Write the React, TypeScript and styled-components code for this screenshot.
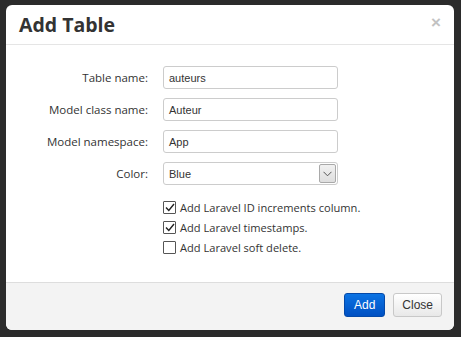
import React from "react";
import styled, { createGlobalStyle } from "styled-components";

//~~~~~~~~~~~~~~~~~~~Global
const GlobalStyle = createGlobalStyle`
  html, body {
    margin: 0;
    padding: 0;
    background: #2b2b2b;
  }
  * {
    box-sizing: border-box;
  }
`;

//~~~~~~~~~~~~~~~~~~~Styled Components
const Backdrop = styled.div`
  width: 461px;
  height: 337px;
  padding: 5px 7px 7px 6px;
  background: #2b2b2b;
`;

const Modal = styled.div`
  width: 448px;
  height: 325px;
  background: #fff;
  border-radius: 6px;
  display: flex;
  flex-direction: column;
  overflow: hidden;
  font-family: "Open Sans", "Noto Sans", sans-serif;
  color: #333;
`;

const Header = styled.header`
  height: 40px;
  flex: none;
  display: flex;
  align-items: center;
  justify-content: space-between;
  padding: 0 13px 1px 13px;
  border-bottom: 1px solid #e5e5e5;

  & > h2 {
    margin: 0;
    font-size: 19.5px;
    font-weight: 700;
    color: #333;
  }
`;

const CloseX = styled.button`
  border: 0;
  background: none;
  padding: 0;
  margin-top: -4px;
  font-family: "Liberation Sans", Arial, sans-serif;
  font-size: 17px;
  font-weight: 700;
  line-height: 1;
  color: #c2c2c2;
  cursor: pointer;
`;

const Body = styled.main`
  flex: 1;
  padding-top: 21px;
`;

const Form = styled.div`
  display: grid;
  grid-template-columns: 142px 175px;
  column-gap: 15px;
  row-gap: 9px;
  align-items: center;
`;

const Label = styled.label`
  text-align: right;
  font-size: 11.5px;
  color: #333;
`;

const TextInput = styled.div`
  height: 23px;
  border: 1px solid #ccc;
  border-radius: 3px;
  padding: 0 5px;
  display: flex;
  align-items: center;
  font-family: "Liberation Sans", Arial, sans-serif;
  font-size: 11px;
  color: #333;
`;

const Select = styled(TextInput)`
  padding-right: 1px;
  justify-content: space-between;
`;

const Arrow = styled.span`
  width: 17px;
  height: 19px;
  border: 1px solid #a9a9a9;
  border-radius: 2px;
  background: linear-gradient(#f1f1f1, #dedede);
  display: flex;
  align-items: center;
  justify-content: center;

  & > svg {
    width: 9px;
    height: 6px;
  }
`;

const Checks = styled.div`
  grid-column: 2;
  margin-top: 6px;
  display: flex;
  flex-direction: column;
  gap: 5px;
  width: 220px;
`;

const CheckRow = styled.div`
  display: flex;
  align-items: center;
  gap: 4px;
  font-size: 11.1px;
  white-space: nowrap;
  color: #333;
`;

const Box = styled.span`
  width: 13px;
  height: 13px;
  flex: none;
  border: 1px solid #555;
  border-radius: 1px;
  background: #fff;
  display: flex;
  align-items: center;
  justify-content: center;

  & > svg {
    width: 10px;
    height: 9px;
  }
`;

const Footer = styled.footer`
  height: 48px;
  flex: none;
  background: #f3f3f3;
  border-top: 1px solid #ddd;
  display: flex;
  align-items: center;
  justify-content: flex-end;
  gap: 8px;
  padding: 0 12px 3px 0;
`;

const Button = styled.button<{ $primary?: boolean }>`
  height: 24px;
  padding: 0 ${({ $primary }) => ($primary ? "9px" : "8px")};
  border-radius: 3px;
  font-family: "Liberation Sans", Arial, sans-serif;
  font-size: 12px;
  cursor: pointer;
  border: 1px solid ${({ $primary }) => ($primary ? "#0449a8" : "#c8c8c8")};
  color: ${({ $primary }) => ($primary ? "#fff" : "#333")};
  background: ${({ $primary }) =>
    $primary
      ? "linear-gradient(#0b73e3, #0050c2)"
      : "linear-gradient(#ffffff, #e8e8e8)"};
`;

//~~~~~~~~~~~~~~~~~~~Data
const fields = [
  { label: "Table name:", value: "auteurs" },
  { label: "Model class name:", value: "Auteur" },
  { label: "Model namespace:", value: "App" },
];

const options = [
  { text: "Add Laravel ID increments column.", checked: true },
  { text: "Add Laravel timestamps.", checked: true },
  { text: "Add Laravel soft delete.", checked: false },
];

//~~~~~~~~~~~~~~~~~~~Component
const App = (): JSX.Element => {
  return (
    <>
      <GlobalStyle />
      <Backdrop>
        <Modal>
          <Header>
            <h2>Add Table</h2>
            <CloseX>×</CloseX>
          </Header>
          <Body>
            <Form>
              {fields.map((f) => (
                <React.Fragment key={f.label}>
                  <Label>{f.label}</Label>
                  <TextInput>{f.value}</TextInput>
                </React.Fragment>
              ))}
              <Label>Color:</Label>
              <Select>
                Blue
                <Arrow>
                  <svg viewBox="0 0 9 6">
                    <path d="M0.5 0.8 L4.5 4.8 L8.5 0.8" fill="none" stroke="#555" strokeWidth="1" />
                  </svg>
                </Arrow>
              </Select>
              <Checks>
                {options.map((o) => (
                  <CheckRow key={o.text}>
                    <Box>
                      {o.checked && (
                        <svg viewBox="0 0 10 9">
                          <path d="M1 4.5 L3.8 7.5 L9 1" fill="none" stroke="#222" strokeWidth="1.4" />
                        </svg>
                      )}
                    </Box>
                    {o.text}
                  </CheckRow>
                ))}
              </Checks>
            </Form>
          </Body>
          <Footer>
            <Button $primary>Add</Button>
            <Button>Close</Button>
          </Footer>
        </Modal>
      </Backdrop>
    </>
  );
};

export default App;
